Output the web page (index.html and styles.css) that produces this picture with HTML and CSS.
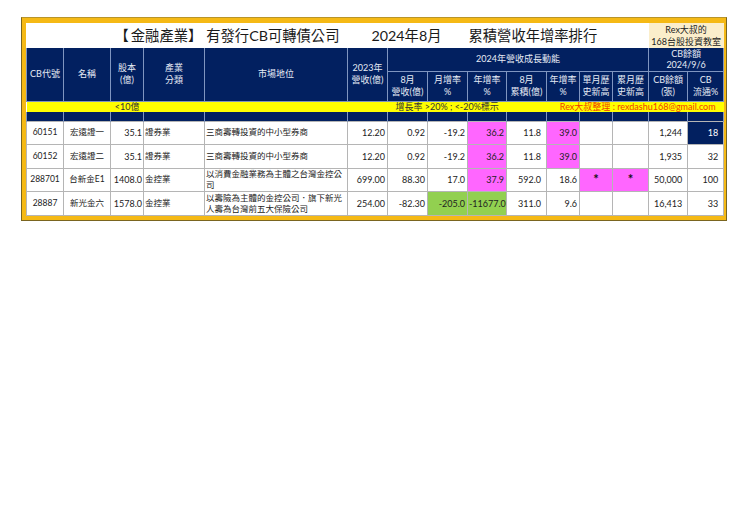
FILE: index.html
```html
<!DOCTYPE html>
<html lang="zh-Hant">
<head>
<meta charset="utf-8">
<title>金融產業 有發行CB可轉債公司</title>
<link rel="stylesheet" href="styles.css">
</head>
<body>
<div class="frame">
<table class="sheet">
<colgroup>
<col class="c1"><col class="c2"><col class="c3"><col class="c4"><col class="c5"><col class="c6"><col class="c7"><col class="c8"><col class="c9"><col class="c10"><col class="c11"><col class="c12"><col class="c13"><col class="c14"><col class="c15">
</colgroup>
<thead>
<tr class="title-row">
<td colspan="13" class="title"><span class="t1">【</span><span class="t1b">金融產業</span><span>】</span><span class="t2">有發行CB可轉債公司</span><span class="t3">2024年8月</span><span class="t4">累積營收年增率排行</span></td>
<td colspan="2" class="brand">Rex大叔的<br>168台股投資教室</td>
</tr>
<tr class="h1">
<th rowspan="2">CB代號</th><th rowspan="2">名稱</th><th rowspan="2">股本<br>(億)</th><th rowspan="2">產業<br>分類</th><th rowspan="2">市場地位</th><th rowspan="2">2023年<br>營收(億)</th>
<th colspan="7">2024年營收成長動能</th>
<th colspan="2" class="cbdate">CB餘額<br>2024/9/6</th>
</tr>
<tr class="h2">
<th>8月<br>營收(億)</th><th>月增率<br>%</th><th>年增率<br>%</th><th>8月<br>累積(億)</th><th>年增率<br>%</th><th>單月歷<br>史新高</th><th>累月歷<br>史新高</th><th>CB餘額<br>(張)</th><th>CB<br>流通%</th>
</tr>
<tr class="note">
<td colspan="3" class="n1">&lt;10億</td><td colspan="6" class="n2">增長率 &gt;20% ; &lt;-20%標示</td><td colspan="6" class="n3">Rex大叔整理 : rexdashu168@gmail.com</td>
</tr>
<tr class="spacer"><th></th><th></th><th></th><th></th><th></th><th></th><th></th><th></th><th></th><th></th><th></th><th></th><th></th><th></th><th></th></tr>
</thead>
<tbody>
<tr>
<td class="ctr">60151</td><td class="ctr">宏遠證一</td><td class="num">35.1</td><td>證券業</td><td>三商壽轉投資的中小型券商</td><td class="num">12.20</td><td class="num">0.92</td><td class="num">-19.2</td><td class="num pink">36.2</td><td class="num">11.8</td><td class="num pink">39.0</td><td></td><td></td><td class="num">1,244</td><td class="num navy">18</td>
</tr>
<tr>
<td class="ctr">60152</td><td class="ctr">宏遠證二</td><td class="num">35.1</td><td>證券業</td><td>三商壽轉投資的中小型券商</td><td class="num">12.20</td><td class="num">0.92</td><td class="num">-19.2</td><td class="num pink">36.2</td><td class="num">11.8</td><td class="num pink">39.0</td><td></td><td></td><td class="num">1,935</td><td class="num">32</td>
</tr>
<tr>
<td class="ctr">288701</td><td class="ctr">台新金E1</td><td class="num">1408.0</td><td>金控業</td><td>以消費金融業務為主體之台灣金控公司</td><td class="num">699.00</td><td class="num">88.30</td><td class="num">17.0</td><td class="num pink">37.9</td><td class="num">592.0</td><td class="num">18.6</td><td class="star pink">*</td><td class="star pink">*</td><td class="num">50,000</td><td class="num">100</td>
</tr>
<tr>
<td class="ctr">28887</td><td class="ctr">新光金六</td><td class="num">1578.0</td><td>金控業</td><td>以壽險為主體的金控公司．旗下新光人壽為台灣前五大保險公司</td><td class="num">254.00</td><td class="num">-82.30</td><td class="num green">-205.0</td><td class="num green">-11677.0</td><td class="num">311.0</td><td class="num">9.6</td><td></td><td></td><td class="num">16,413</td><td class="num">33</td>
</tr>
</tbody>
</table>
</div>
</body>
</html>
```
FILE: styles.css
```css
html, body { margin: 0; padding: 0; background: #fff; }
body { width: 740px; height: 523px; overflow: hidden; font-family: "Lato", "Noto Sans CJK TC", sans-serif; }
.frame {
  box-sizing: border-box;
  width: 706px;
  height: 204px;
  margin: 17px 0 0 21px;
  padding: 5px 3px 3px 4px;
  background: #f5b915;
  border: 1px solid #7a6520;
  border-top-color: #b8952a;
}
.sheet { border-collapse: collapse; table-layout: fixed; width: 697px; background: #fff; }
.c1 { width: 37px; } .c2 { width: 47px; } .c3 { width: 33px; } .c4 { width: 61px; } .c5 { width: 143px; }
.c6 { width: 40px; } .c7 { width: 40px; } .c8 { width: 40px; } .c9 { width: 39px; } .c10 { width: 40px; }
.c11 { width: 33px; } .c12 { width: 33px; } .c13 { width: 36px; } .c14 { width: 39px; } .c15 { width: 36px; }
.sheet td, .sheet th { padding: 0; overflow: hidden; }
.title-row { height: 25px; }
.title { font-size: 14.3px; color: #1a1a1a; white-space: nowrap; line-height: 20px; padding-left: 88px !important; }
.t1b { margin-left: 2px; }
.t2 { margin-left: 4px; }
.t3 { margin-left: 32px; }
.t4 { margin-left: 27px; }
.brand { background: #fbeecb; font-size: 9px; line-height: 12px; text-align: center; color: #222; }
.h1 { height: 23px; }
.h2 { height: 30px; }
.h1 th, .h2 th, .spacer th {
  background: #022060; color: #e6ebf5; font-size: 9px; font-weight: normal; line-height: 12px; text-align: center;
  border: 1px solid #7f95c0;
}
.h1 th { border-top: 0; }
.h1 .cbdate { line-height: 11px; }
.note { height: 11px; background: #ffff00; font-size: 9px; line-height: 10px; color: #333; }
.note td { white-space: nowrap; }
.n1 { text-align: right; padding-right: 4px !important; }
.n2 { padding-left: 252px !important; }
.n3 { color: #f03c00; text-align: right; padding-right: 8px !important; }
.spacer { height: 9px; }
.spacer th { border-top: 0; border-bottom: 0; }
tbody tr { height: 23.6px; }
tbody td {
  border: 1px solid #b5b5b5; font-size: 8.5px; line-height: 11px; color: #222; padding: 0 1px !important;
}
.ctr { text-align: center; }
.num { text-align: right; font-size: 9px; }
tbody td:nth-child(6), tbody td:nth-child(7), tbody td:nth-child(8), tbody td:nth-child(9), tbody td:nth-child(11) { padding-right: 2px !important; }
tbody td:nth-child(10), tbody td:nth-child(14), tbody td:nth-child(15) { padding-right: 5px !important; }
.pink { background: #ff66ff; }
.green { background: #92d050; }
.navy { background: #022060; color: #fff; }
.star { text-align: center; font-size: 13px; font-weight: bold; line-height: 14px; vertical-align: top; padding-top: 3px !important; color: #111; }
```
